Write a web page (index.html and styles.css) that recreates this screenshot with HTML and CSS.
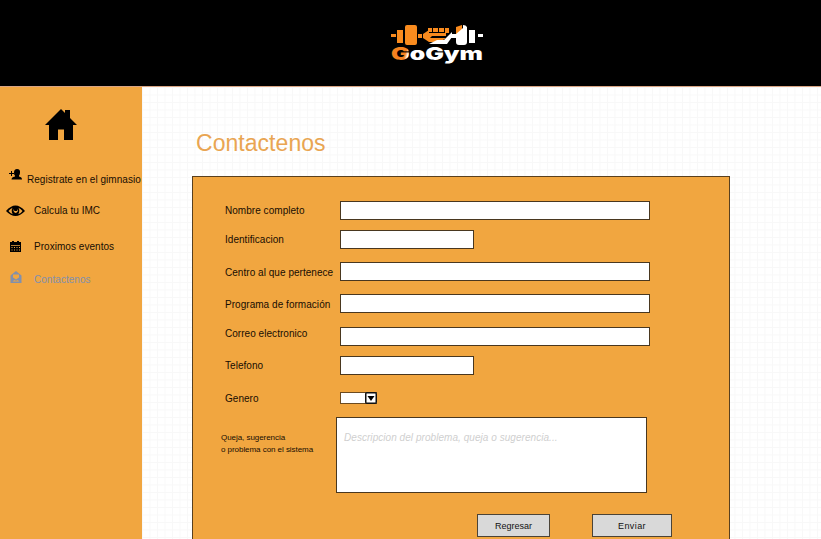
FILE: index.html
```html
<!DOCTYPE html>
<html lang="es">
<head>
<meta charset="utf-8">
<title>GoGym - Contactenos</title>
<link rel="stylesheet" href="styles.css">
</head>
<body>
<header class="topbar">
  <svg class="logo" width="95" height="42" viewBox="0 0 95 42" role="img" aria-label="GoGym">
    <defs>
      <linearGradient id="split" gradientUnits="userSpaceOnUse" x1="0" y1="22" x2="93" y2="50">
        <stop offset=".17" stop-color="#f5821f"/><stop offset=".2" stop-color="#fff"/>
      </linearGradient>
    </defs>
    <g fill="#f98b1e">
      <path d="M1 9h5v3H1zM7 5h6v13H7zM15 2q0-2 2-2h8q2 0 2 2v16q0 2-2 2h-8q-2 0-2-2zM28 9h4v4h-4z"/>
      <path d="M33 9l6-4v3h17v3H42l-2 2h16l-6 4H39l-6-4zM38 3h4v4h-4zM43 3h5v4h-5zM49 3h5v4h-5zM55 3h4v5h-4z"/>
      <path d="M66 2l6-2v6l-6 5z"/>
    </g>
    <g fill="#fff">
      <path d="M62 7v5l-5 7H39l8-4h7zM62 9h4l7-6v-3q3 0 4 2v15q0 3-3 3h-5q-3 0-3-3v-4h-5zM79 5h6v13h-6zM88 9h5v3h-5z"/>
    </g>
    <text class="logo-text" x="1" y="34.500" textLength="92" lengthAdjust="spacingAndGlyphs" fill="url(#split)">GoGym</text>
  </svg>
</header>
<div class="page">
  <nav class="sidebar">
    <a class="home" aria-label="Inicio">
      <svg width="34" height="32" viewBox="0 0 34 32"><path d="M17 0l4 4V1h5v8l7 7h-4v15h-9V20.500h-6V31H5V16H1z"/></svg>
    </a>
    <a class="nav-item register">
      <svg width="14" height="12" viewBox="0 0 14 12"><path d="M0 4h2V2h1v2h2v1H3v2H2V5H0z"/><path d="M8 0Q11.500 0 11 4q-.3 2-1 2.600v.8Q13 8 13 10.500H2.500Q2.500 8 6 7.400v-.8Q5 6 5 3.500 5 0 8 0z"/></svg>
      <span>Registrate en el gimnasio</span>
    </a>
    <a class="nav-item imc">
      <svg width="20" height="12" viewBox="0 0 20 12"><path fill-rule="evenodd" d="M0 6Q9.500-5 19 6 9.500 16 0 6zM2.500 6q2 2.600 4.200 3.300Q4.800 6 6.500 2.700 4 4 2.500 6zM12.500 2.700q1.700 3.300-.2 6.600Q15 8.500 16.500 6 15 4 12.500 2.700zM7.500 4v2q2 4 4.500 0V4l-1 2H8.500z"/></svg>
      <span>Calcula tu IMC</span>
    </a>
    <a class="nav-item events">
      <svg width="11" height="11" viewBox="0 0 11 11"><path fill-rule="evenodd" d="M0 1h2V0h2v1h3V0h2v1h2v10H0zM1 4v.7h9V4zM1.500 6v1h1V6zM4 6v1h1V6zM6.500 6v1h1V6zM9 6v1h1V6zM1.500 8.500v1h1v-1zM4 8.500v1h1v-1zM6.500 8.500v1h1v-1zM9 8.500v1h1v-1z"/></svg>
      <span>Proximos eventos</span>
    </a>
    <a class="nav-item contact">
      <svg width="12" height="12" viewBox="0 0 12 12"><path fill-rule="evenodd" d="M6 0l5.500 4.500V12H.5V4.500zM3 3.500v3l3 2 3-2v-3zM2.500 10.500h7L7.500 9 6 10 4.500 9z"/></svg>
      <span>Contactenos</span>
    </a>
  </nav>
  <main class="content">
    <h1>Contactenos</h1>
    <form class="panel">
      <div class="row r1"><label for="nombre">Nombre completo</label><input id="nombre" type="text"></div>
      <div class="row r2"><label for="ident">Identificacion</label><input id="ident" class="short" type="text"></div>
      <div class="row r3"><label for="centro">Centro al que pertenece</label><input id="centro" type="text"></div>
      <div class="row r4"><label for="programa">Programa de formación</label><input id="programa" type="text"></div>
      <div class="row r5"><label for="correo">Correo electronico</label><input id="correo" type="text"></div>
      <div class="row r6"><label for="tel">Telefono</label><input id="tel" class="short" type="text"></div>
      <div class="row r7"><label>Genero</label>
        <div class="select"><svg width="12" height="12" viewBox="0 0 12 12"><rect x=".75" y=".75" width="10.500" height="10.500" rx="1" fill="#fff" stroke="#111" stroke-width="1.500"/><path d="M2.500 4h7L6 9z"/></svg></div>
      </div>
      <div class="message">
        <label for="msg">Queja, sugerencia<br>o problema con el sistema</label>
        <textarea id="msg" placeholder="Descripcion del problema, queja o sugerencia..."></textarea>
      </div>
      <div class="actions"><button type="button">Regresar</button><button type="button" class="send">Enviar</button></div>
    </form>
  </main>
</div>
</body>
</html>
```
FILE: styles.css
```css
* { box-sizing: border-box; }
body {
  margin: 0;
  font: 10px/12px "Liberation Sans", Arial, sans-serif;
  letter-spacing: .04px;
  color: #170d02;
  background: #fff;
}
.topbar {
  height: 86px;
  padding: 25px 0 0 390px;
  background: #000;
}
.logo { display: block; }
.logo-text {
  font: 900 17px Inter, "DejaVu Sans", sans-serif;
  letter-spacing: 0;
}
.page {
  display: flex;
  height: 453px;
  border-top: 1px solid #d9a584;
}
.sidebar {
  width: 142px;
  flex: none;
  background: #f1a640;
}
.home {
  display: block;
  height: 82px;
  padding: 22px 0 0 44px;
}
.home svg { display: block; }
.nav-item {
  display: flex;
  align-items: flex-start;
  white-space: nowrap;
}
.nav-item svg { flex: none; }
.register { height: 36px; padding-left: 9px; }
.register span { margin: 5px 0 0 4px; }
.imc { height: 36px; padding-left: 6px; }
.imc span { margin-left: 8px; }
.events { height: 30px; padding-left: 10px; }
.events span { margin-left: 13px; }
.contact { padding-left: 10px; color: #8290ac; fill: #8290ac; }
.contact span { margin: 3px 0 0 12px; }
.content {
  flex: 1;
  padding: 42px 0 0 50px;
  background-color: #fff;
  background-image:
    linear-gradient(to right, #f8f8f8 1px, transparent 1px),
    linear-gradient(#f8f8f8 1px, transparent 1px);
  background-size: 7.500px 7.500px;
}
h1 {
  margin: 0 0 19px 4px;
  font-size: 23px;
  line-height: 28px;
  font-weight: 400;
  color: #e9a552;
}
.panel {
  width: 538px;
  height: 363px;
  padding: 24px 0 0 32px;
  border: 1px solid #59401f;
  border-bottom: 0;
  background: #f1a640;
}
.row {
  display: grid;
  grid-template-columns: 115px 310px;
  align-items: start;
}
.row label { padding-top: 4px; white-space: nowrap; }
input {
  width: 310px;
  height: 19px;
  padding: 0 4px;
  border: 1px solid #49371f;
  background: #fff;
}
.short { width: 134px; }
.r1 { height: 29px; }
.r2 { height: 32px; }
.r3 { height: 32px; }
.r4 { height: 33px; }
.r5 { height: 29px; }
.r6 { height: 36px; }
.r7 { height: 25px; }
.r3 label, .r4 label { padding-top: 5px; }
.r5 label { padding-top: 1px; }
.r7 label { padding-top: 1px; }
.select {
  display: flex;
  justify-content: flex-end;
  width: 37px;
  height: 12px;
  border: 1px solid #6b4a20;
  border-right: 0;
  background: #fff;
}
.select svg { flex: none; margin-top: -1px; }
.message {
  display: grid;
  grid-template-columns: 115px 311px;
  height: 97px;
  margin-left: -4px;
}
.message label {
  padding-top: 15px;
  font-size: 8px;
  letter-spacing: -.05px;
  white-space: nowrap;
}
textarea {
  width: 311px;
  height: 76px;
  padding: 14px 7px;
  border: 1px solid #49371f;
  background: #fff;
  font: italic 10px/12px "Liberation Sans", Arial, sans-serif;
  letter-spacing: .05px;
  resize: none;
}
textarea::placeholder { color: #cfcfcf; opacity: 1; }
.actions { display: flex; gap: 42px; padding-left: 252px; }
button {
  width: 73px;
  height: 23px;
  padding: 0;
  border: 1px solid #4b4337;
  background: #d9d9d9;
  font: 9px/12px "Liberation Sans", Arial, sans-serif;
  color: #111;
}
.send { width: 80px; letter-spacing: .4px; }
```
